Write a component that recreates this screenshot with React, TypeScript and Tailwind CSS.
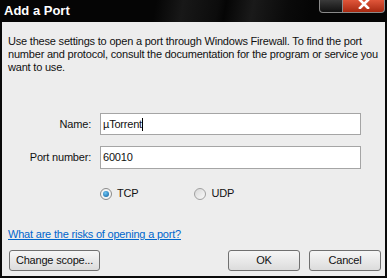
export default function App() {
  return (
    <div className="w-[387px] h-[278px] flex flex-col bg-[#0a0a0a] font-['Liberation_Sans',Arial,sans-serif] text-[11px] leading-[13px] tracking-[-0.2px] text-[#111] overflow-hidden">
      <div className="h-[22px] shrink-0 flex items-start justify-between bg-[linear-gradient(100deg,#050505_0%,#050505_40%,#181818_47%,#0c0c0c_56%,#050505_58%,#1a1a1a_65%,#0a0a0a_74%,#050505_80%)]">
        <div className="pl-1 pt-[4px] text-white font-bold text-[13px] leading-[14px] tracking-normal">Add a Port</div>
        <div className="flex mr-[2px]">
          <div className="w-[24px] h-[13px] bg-gradient-to-b from-[#3a3a3a] to-[#111] border border-t-0 border-[#8a8a8a] rounded-bl-[4px]" />
          <div className="w-[42px] h-[13px] bg-gradient-to-b from-[#e0563a] to-[#a8280f] border border-t-0 border-l-0 border-[#8a8a8a] rounded-br-[4px] flex items-start justify-center">
            <svg width="12" height="9" viewBox="0 0 12 9">
              <path d="M2 0 L10 8 M10 0 L2 8" stroke="#fff" strokeWidth="2.6" strokeLinecap="square" />
            </svg>
          </div>
        </div>
      </div>
      <div className="flex-1 mx-[2px] mb-[2px] bg-[#ededed] flex flex-col px-[6px] pt-[13px]">
        <p className="w-[372px]">
          Use these settings to open a port through Windows Firewall. To find the port number and protocol, consult the documentation for the program or service you want to use.
        </p>
        <div className="mt-[39px] flex items-center">
          <div className="w-[83px] text-right">Name:</div>
          <div className="ml-[9px] w-[261px] h-[22px] bg-white border border-[#a5a5a5] flex items-center px-[2px]">
            µTorrent<span className="w-px h-[13px] bg-black" />
          </div>
        </div>
        <div className="mt-[11px] flex items-center">
          <div className="w-[83px] text-right">Port number:</div>
          <div className="ml-[9px] w-[261px] h-[23px] bg-white border border-[#a5a5a5] flex items-center px-[2px]">60010</div>
        </div>
        <div className="mt-[18px] flex items-center pl-[92px]">
          <div className="flex items-center">
            <span className="w-[12px] h-[12px] rounded-full border border-[#8a8a8a] bg-[#f4f4f4] flex items-center justify-center">
              <span className="w-[6px] h-[6px] rounded-full bg-[radial-gradient(circle_at_40%_35%,#6fc6f5,#0a5a9a)]" />
            </span>
            <span className="ml-[5px]">TCP</span>
          </div>
          <div className="flex items-center ml-[56px]">
            <span className="w-[12px] h-[12px] rounded-full border border-[#a0a0a0] bg-gradient-to-br from-[#d8d8d8] to-[#fafafa]" />
            <span className="ml-[5px]">UDP</span>
          </div>
        </div>
        <div className="mt-[28px]">
          <span className="text-[#0066cc] underline">What are the risks of opening a port?</span>
        </div>
        <div className="mt-[9px] flex items-center">
          <button className="ml-[1px] w-[91px] h-[21px] rounded-[3px] border border-[#707070] bg-gradient-to-b from-[#f6f6f6] to-[#dcdcdc]">Change scope...</button>
          <button className="ml-auto w-[72px] h-[21px] rounded-[3px] border border-[#707070] bg-gradient-to-b from-[#f6f6f6] to-[#dcdcdc]">OK</button>
          <button className="ml-[9px] mr-[-2px] w-[72px] h-[21px] rounded-[3px] border border-[#707070] bg-gradient-to-b from-[#f6f6f6] to-[#dcdcdc]">Cancel</button>
        </div>
      </div>
    </div>
  )
}
